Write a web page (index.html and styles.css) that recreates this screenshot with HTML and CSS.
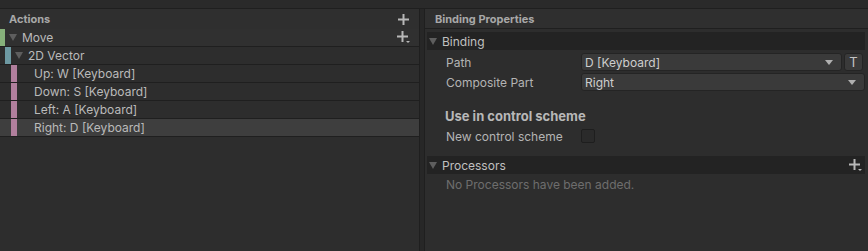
FILE: index.html
```html
<!DOCTYPE html>
<html>
<head>
<meta charset="utf-8">
<link rel="stylesheet" href="styles.css">
</head>
<body>
<div class="app">
  <div class="toolbar"></div>
  <div class="main">
    <div class="actions-panel">
      <div class="panel-header">
        <span class="header-title">Actions</span>
        <svg class="plus" width="11" height="11" viewBox="0 0 11 11"><rect x="4.5" y="0" width="2" height="11" fill="#b8b8b8"/><rect x="0" y="4.5" width="11" height="2" fill="#b8b8b8"/></svg>
      </div>
      <div class="tree-row action-row">
        <span class="bar bar-green"></span>
        <span class="tri"></span>
        <span class="row-text">Move</span>
        <svg class="plus-drop" width="14" height="13" viewBox="0 0 14 13"><rect x="4.5" y="0" width="2" height="11" fill="#b8b8b8"/><rect x="0" y="4.5" width="11" height="2" fill="#b8b8b8"/><polygon points="9,10 13,10 11,12" fill="#b8b8b8"/></svg>
      </div>
      <div class="tree-row composite-row">
        <span class="bar bar-spacer"></span>
        <span class="bar bar-teal"></span>
        <span class="tri"></span>
        <span class="row-text">2D Vector</span>
      </div>
      <div class="tree-row binding-row">
        <span class="bar bar-spacer2"></span>
        <span class="bar bar-pink"></span>
        <span class="row-text">Up: W [Keyboard]</span>
      </div>
      <div class="tree-row binding-row">
        <span class="bar bar-spacer2"></span>
        <span class="bar bar-pink"></span>
        <span class="row-text">Down: S [Keyboard]</span>
      </div>
      <div class="tree-row binding-row">
        <span class="bar bar-spacer2"></span>
        <span class="bar bar-pink"></span>
        <span class="row-text">Left: A [Keyboard]</span>
      </div>
      <div class="tree-row binding-row selected">
        <span class="bar bar-spacer2"></span>
        <span class="bar bar-pink"></span>
        <span class="row-text">Right: D [Keyboard]</span>
      </div>
    </div>
    <div class="splitter"></div>
    <div class="props-panel">
      <div class="panel-header props-header">
        <span class="header-title">Binding Properties</span>
      </div>
      <div class="props-body">
        <div class="foldout">
          <span class="tri"></span>
          <span class="foldout-text">Binding</span>
        </div>
        <div class="field-row first-field">
          <span class="field-label">Path</span>
          <div class="dropdown path-dropdown">
            <span class="dd-text">D [Keyboard]</span>
            <span class="dd-arrow"></span>
          </div>
          <div class="t-button">T</div>
        </div>
        <div class="field-row">
          <span class="field-label">Composite Part</span>
          <div class="dropdown">
            <span class="dd-text">Right</span>
            <span class="dd-arrow"></span>
          </div>
        </div>
        <div class="section-title">Use in control scheme</div>
        <div class="field-row check-row">
          <span class="field-label">New control scheme</span>
          <span class="checkbox"></span>
        </div>
        <div class="foldout processors">
          <span class="tri"></span>
          <span class="foldout-text">Processors</span>
          <svg class="plus-drop" width="14" height="13" viewBox="0 0 14 13"><rect x="4.5" y="0" width="2" height="11" fill="#b8b8b8"/><rect x="0" y="4.5" width="11" height="2" fill="#b8b8b8"/><polygon points="9,10 13,10 11,12" fill="#b8b8b8"/></svg>
        </div>
        <div class="empty-text">No Processors have been added.</div>
      </div>
    </div>
  </div>
</div>
</body>
</html>
```
FILE: styles.css
```css
* { box-sizing: border-box; }
html, body {
  margin: 0;
  padding: 0;
  width: 868px;
  height: 251px;
  overflow: hidden;
  background: #2c2c2c;
  font-family: Inter, "Noto Sans", sans-serif;
  color: #c4c4c4;
}
.app {
  display: flex;
  flex-direction: column;
  height: 251px;
}
.toolbar {
  height: 9px;
  background: #2a2a2a;
  border-bottom: 1px solid #1f1f1f;
}
.main {
  display: flex;
  flex: 1;
  min-height: 0;
}
.actions-panel {
  width: 420px;
  background: #2d2d2d;
  border-right: 1px solid #1f1f1f;
  display: flex;
  flex-direction: column;
}
.splitter {
  width: 4px;
  background: #272727;
}
.props-panel {
  flex: 1;
  background: #2d2d2d;
  border-left: 1px solid #1f1f1f;
  display: flex;
  flex-direction: column;
}
.panel-header {
  height: 20px;
  display: flex;
  align-items: center;
  justify-content: space-between;
  padding: 0 8px 0 9px;
  background: #2f2f2f;
}
.header-title {
  font-size: 11px;
  font-weight: 700;
  color: #a8a8a8;
}
.props-header {
  border-bottom: 1px solid #1f1f1f;
  padding-left: 10px;
}
.plus { display: block; margin-right: 2px; }
.tree-row {
  height: 18px;
  display: flex;
  align-items: center;
  border-bottom: 1px solid #1f1f1f;
  font-size: 12px;
  color: #bababa;
}
.action-row {
  background: #303030;
  font-size: 12px;
}
.selected { background: #3e3e3e; }
.bar {
  height: 100%;
  flex: none;
}
.bar-green { width: 5px; background: #86b07a; }
.bar-spacer { width: 5px; }
.bar-teal { width: 6px; background: #6d99a2; }
.bar-spacer2 { width: 11px; }
.bar-pink { width: 6px; background: #b17f9d; }
.tri {
  width: 0;
  height: 0;
  border-left: 4px solid transparent;
  border-right: 4px solid transparent;
  border-top: 7px solid #5e5e5e;
  margin: 0 5px 0 4px;
  flex: none;
}
.row-text { flex: 1; }
.binding-row .row-text { padding-left: 17px; }
.plus-drop { display: block; margin-right: 8px; flex: none; }
.props-body {
  padding: 3px 3px 0 2px;
  display: flex;
  flex-direction: column;
}
.foldout {
  height: 18px;
  background: #232323;
  display: flex;
  align-items: center;
  font-size: 12px;
  color: #c0c0c0;
}
.foldout .tri { margin: 0 5px 0 2px; }
.foldout-text { flex: 1; }
.foldout .plus-drop { margin-right: 2px; }
.field-row {
  display: flex;
  align-items: center;
  height: 18px;
  margin-top: 2px;
  padding-left: 19px;
  font-size: 12px;
  color: #b4b4b4;
}
.first-field { margin-top: 3px; }
.field-label { width: 135px; flex: none; }
.dropdown {
  flex: 1;
  height: 18px;
  background: #3a3a3a;
  border: 1px solid #242424;
  border-radius: 3px;
  display: flex;
  align-items: center;
  justify-content: space-between;
  padding: 0 8px 0 3px;
  color: #cecece;
  font-size: 12px;
}
.path-dropdown { margin-right: 2px; }
.dd-arrow {
  width: 0;
  height: 0;
  border-left: 4px solid transparent;
  border-right: 4px solid transparent;
  border-top: 5px solid #b0b0b0;
}
.t-button {
  width: 19px;
  height: 18px;
  background: #3a3a3a;
  border: 1px solid #242424;
  border-radius: 3px;
  display: flex;
  align-items: center;
  justify-content: center;
  font-size: 13px;
  color: #c4c4c4;
  margin-right: 2px;
  flex: none;
}
.section-title {
  margin-top: 16px;
  padding-left: 18px;
  font-size: 13px;
  font-weight: 700;
  color: #b8b8b8;
  height: 18px;
  line-height: 18px;
}
.check-row { margin-top: 2px; }
.checkbox {
  width: 14px;
  height: 14px;
  background: #2a2a2a;
  border: 1px solid #1e1e1e;
  border-radius: 2px;
}
.processors { margin-top: 11px; }
.empty-text {
  padding-left: 19px;
  margin-top: 2px;
  font-size: 12px;
  color: #6d6d6d;
  height: 18px;
  line-height: 18px;
}
```
